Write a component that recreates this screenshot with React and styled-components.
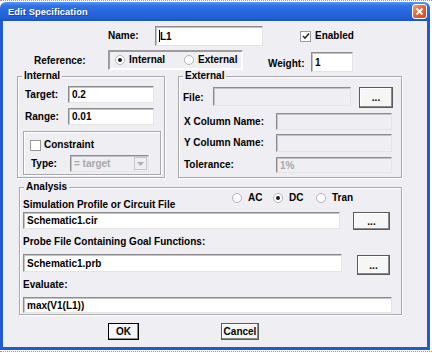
import React from "react";
import styled, { createGlobalStyle } from "styled-components";

const GlobalStyle = createGlobalStyle`
  html, body {
    margin: 0;
    padding: 0;
    background: #fff;
  }
  body {
    font-family: "Liberation Sans", Arial, sans-serif;
  }
`;

const FACE = "#EFEEF2";

const Desktop = styled.div`
  width: 432px;
  height: 353px;
  box-sizing: border-box;
  border-top: 1px dotted #9a9a9a;
  padding-top: 1px;
  overflow: hidden;
`;

const Ground = styled.div`
  margin-top: 1px;
  border-top: 1px dotted #9a9a9a;
`;

const Window = styled.div`
  width: 430px;
  display: flex;
  flex-direction: column;
`;

const TitleBar = styled.div`
  height: 19px;
  display: flex;
  align-items: center;
  justify-content: space-between;
  padding: 0 3px 0 8px;
  border-radius: 6px 6px 0 0;
  background: linear-gradient(
    180deg,
    #5d9bf4 0%,
    #3475e8 16%,
    #2766de 50%,
    #2360d8 82%,
    #1c52c6 100%
  );
`;

const Title = styled.span`
  color: #fff;
  font-weight: bold;
  font-size: 9.3px;
  letter-spacing: 0.1px;
  text-shadow: 1px 1px 0 #1a449e;
`;

const CloseBox = styled.div`
  width: 15px;
  height: 15px;
  box-sizing: border-box;
  border: 1px solid #fff;
  border-radius: 3px;
  background: linear-gradient(135deg, #f2a482 0%, #e2683f 45%, #cc4a20 100%);
  display: flex;
  align-items: center;
  justify-content: center;
`;

const Body = styled.div`
  height: 321px;
  background: ${FACE};
  border: 3px solid #2259d6;
  border-top: none;
  padding-top: 5px;
  display: flex;
  flex-direction: column;
`;

const Row = styled.div`
  display: flex;
  align-items: ${(p) => p.$align || "center"};
  margin-top: ${(p) => p.$mt || 0}px;
  margin-left: ${(p) => p.$ml || 0}px;
  height: ${(p) => (p.$h ? `${p.$h}px` : "auto")};
`;

const Label = styled.span`
  display: inline-block;
  font-weight: bold;
  font-size: 10px;
  line-height: 12px;
  color: #000;
  white-space: nowrap;
  margin-left: ${(p) => p.$ml || 0}px;
  margin-top: ${(p) => p.$mt || 0}px;
  width: ${(p) => (p.$w ? `${p.$w}px` : "auto")};
  flex-shrink: 0;
`;

const Field = styled.div`
  width: ${(p) => p.$w}px;
  height: ${(p) => p.$h}px;
  margin-left: ${(p) => p.$ml || 0}px;
  margin-top: ${(p) => p.$mt || 0}px;
  box-sizing: border-box;
  flex-shrink: 0;
  background: ${(p) => (p.$off ? FACE : "#fff")};
  border: 1px solid;
  border-color: #8c8c8c #e4e4e4 #e4e4e4 #8c8c8c;
  box-shadow: inset 1px 1px 0 #c4c4c4;
  padding-left: 3px;
  display: flex;
  align-items: center;
  font-weight: bold;
  font-size: 10px;
  color: ${(p) => (p.$off ? "#a8a8a8" : "#000")};
  white-space: nowrap;
  overflow: hidden;
`;

const Caret = styled.span`
  display: inline-block;
  width: 1px;
  height: 12px;
  background: #000;
`;

const Button = styled.div`
  width: ${(p) => p.$w}px;
  height: ${(p) => p.$h}px;
  margin-left: ${(p) => p.$ml || 0}px;
  margin-top: ${(p) => p.$mt || 0}px;
  box-sizing: border-box;
  flex-shrink: 0;
  background: #f6f6f6;
  border: 1px solid ${(p) => (p.$default ? "#000" : "#5a5a5a")};
  box-shadow: inset -1px -1px 0 #8a8a8a, inset 1px 1px 0 #fff;
  display: flex;
  align-items: center;
  justify-content: center;
  font-weight: bold;
  font-size: 10px;
  color: #000;
`;

const Check = styled.span`
  width: 11px;
  height: 11px;
  box-sizing: border-box;
  flex-shrink: 0;
  background: #fff;
  border: 1px solid #9a9a9a;
  display: inline-flex;
  align-items: center;
  justify-content: center;
  margin-left: ${(p) => p.$ml || 0}px;
`;

const Radio = styled.span`
  width: 10px;
  height: 10px;
  border-radius: 50%;
  box-sizing: border-box;
  flex-shrink: 0;
  border: 1px solid #b4b4b4;
  background: #fff;
  display: inline-flex;
  align-items: center;
  justify-content: center;
  &::after {
    content: "";
    width: 4px;
    height: 4px;
    border-radius: 50%;
    background: ${(p) => (p.$on ? "#1a1a1a" : "transparent")};
  }
`;

const Option = styled.div`
  display: flex;
  align-items: center;
  gap: 4px;
  width: ${(p) => (p.$w ? `${p.$w}px` : "auto")};
  flex-shrink: 0;
`;

const RadioPanel = styled.div`
  width: 135px;
  height: 20px;
  box-sizing: border-box;
  border: 1px solid;
  border-color: #9c9c9c #fff #fff #9c9c9c;
  box-shadow: 1px 1px 0 #9c9c9c inset, -1px -1px 0 #fff inset;
  display: flex;
  align-items: center;
  padding-left: 6px;
  flex-shrink: 0;
`;

const Group = styled.div`
  position: relative;
  width: ${(p) => p.$w}px;
  height: ${(p) => p.$h}px;
  margin-left: ${(p) => p.$ml || 0}px;
  margin-top: ${(p) => p.$mt || 0}px;
  box-sizing: border-box;
  flex-shrink: 0;
  border: 1px solid #a9a9ab;
  box-shadow: inset 1px 1px 0 #fff, 1px 1px 0 #fff;
  display: flex;
  flex-direction: column;
`;

const Legend = styled.span`
  position: absolute;
  top: -7px;
  left: 4px;
  padding: 0 2px;
  background: ${FACE};
  font-weight: bold;
  font-size: 10px;
  line-height: 12px;
  color: #000;
`;

const SelectBox = styled(Field)`
  justify-content: space-between;
  padding-right: 1px;
`;

const DropArrow = styled.span`
  width: 13px;
  height: 13px;
  box-sizing: border-box;
  border: 1px solid #c8c8c8;
  background: ${FACE};
  display: flex;
  align-items: center;
  justify-content: center;
`;

const ButtonRow = styled.div`
  display: flex;
  margin-top: 8px;
`;

export default function App() {
  return (
    <>
      <GlobalStyle />
      <Desktop>
        <Window>
          <TitleBar>
            <Title>Edit Specification</Title>
            <CloseBox>
              <svg width="9" height="9" viewBox="0 0 9 9">
                <path d="M1.5 1.5 L7.5 7.5 M7.5 1.5 L1.5 7.5" stroke="#fff" strokeWidth="2" />
              </svg>
            </CloseBox>
          </TitleBar>
          <Body>
            <Row $h={20}>
              <Label $ml={105} $w={47}>Name:</Label>
              <Field $w={108} $h={20}>
                <Caret />
                L1
              </Field>
              <Check $ml={37}>
                <svg width="8" height="8" viewBox="0 0 8 8">
                  <path d="M1 4 L3 6.2 L7 1.5" stroke="#222" strokeWidth="1.5" fill="none" />
                </svg>
              </Check>
              <Label $ml={4}>Enabled</Label>
            </Row>

            <Row $align="flex-start" $mt={4}>
              <Label $ml={31} $w={74} $mt={5}>Reference:</Label>
              <RadioPanel>
                <Option $w={69}>
                  <Radio $on />
                  <Label>Internal</Label>
                </Option>
                <Option>
                  <Radio />
                  <Label>External</Label>
                </Option>
              </RadioPanel>
              <Label $ml={25} $w={43} $mt={8}>Weight:</Label>
              <Field $w={42} $h={20} $mt={2}>1</Field>
            </Row>

            <Row $align="flex-start" $mt={4}>
              <Group $ml={14} $w={148} $h={102}>
                <Legend>Internal</Legend>
                <Row $mt={9}>
                  <Label $ml={7} $w={43}>Target:</Label>
                  <Field $w={86} $h={17}>0.2</Field>
                </Row>
                <Row $mt={5}>
                  <Label $ml={7} $w={43}>Range:</Label>
                  <Field $w={86} $h={17}>0.01</Field>
                </Row>
                <Group $ml={5} $mt={6} $w={138} $h={44}>
                  <Row $mt={7}>
                    <Check $ml={6} />
                    <Label $ml={3}>Constraint</Label>
                  </Row>
                  <Row $mt={4}>
                    <Label $ml={7} $w={39}>Type:</Label>
                    <SelectBox $w={79} $h={17} $off>
                      = target
                      <DropArrow>
                        <svg width="7" height="4" viewBox="0 0 7 4">
                          <path d="M0 0 H7 L3.5 4 Z" fill="#b0b0b0" />
                        </svg>
                      </DropArrow>
                    </SelectBox>
                  </Row>
                </Group>
              </Group>

              <Group $ml={13} $w={224} $h={102}>
                <Legend>External</Legend>
                <Row $align="flex-start" $mt={10}>
                  <Label $ml={4} $w={30} $mt={5}>File:</Label>
                  <Field $w={138} $h={19} $off />
                  <Button $ml={8} $w={34} $h={21}>...</Button>
                </Row>
                <Row $mt={5}>
                  <Label $ml={5} $w={92}>X Column Name:</Label>
                  <Field $w={116} $h={17} $off />
                </Row>
                <Row $mt={4}>
                  <Label $ml={5} $w={92}>Y Column Name:</Label>
                  <Field $w={116} $h={18} $off />
                </Row>
                <Row $mt={5}>
                  <Label $ml={5} $w={92}>Tolerance:</Label>
                  <Field $w={116} $h={16} $off>1%</Field>
                </Row>
              </Group>
            </Row>

            <Group $ml={16} $mt={9} $w={383} $h={128}>
              <Legend>Analysis</Legend>
              <Row $align="flex-start" $mt={4}>
                <Label $ml={3} $w={209} $mt={7}>
                  Simulation Profile or Circuit File
                </Label>
                <Option $w={41}>
                  <Radio />
                  <Label $ml={2}>AC</Label>
                </Option>
                <Option $w={43}>
                  <Radio $on />
                  <Label $ml={2}>DC</Label>
                </Option>
                <Option>
                  <Radio />
                  <Label $ml={2}>Tran</Label>
                </Option>
              </Row>
              <Row $align="flex-start" $mt={1}>
                <Field $ml={3} $w={317} $h={17}>Schematic1.cir</Field>
                <Button $ml={13} $w={37} $h={18}>...</Button>
              </Row>
              <Label $ml={3} $mt={6}>Probe File Containing Goal Functions:</Label>
              <Row $align="flex-start" $mt={6}>
                <Field $ml={3} $w={319} $h={18}>Schematic1.prb</Field>
                <Button $ml={15} $w={33} $h={20} $mt={1}>...</Button>
              </Row>
              <Label $ml={3} $mt={4}>Evaluate:</Label>
              <Field $ml={3} $mt={6} $w={369} $h={16}>max(V1(L1))</Field>
            </Group>

            <ButtonRow>
              <Button $default $ml={105} $w={31} $h={17}>OK</Button>
              <Button $ml={82} $w={38} $h={17}>Cancel</Button>
            </ButtonRow>
          </Body>
        </Window>
        <Ground />
      </Desktop>
    </>
  );
}
